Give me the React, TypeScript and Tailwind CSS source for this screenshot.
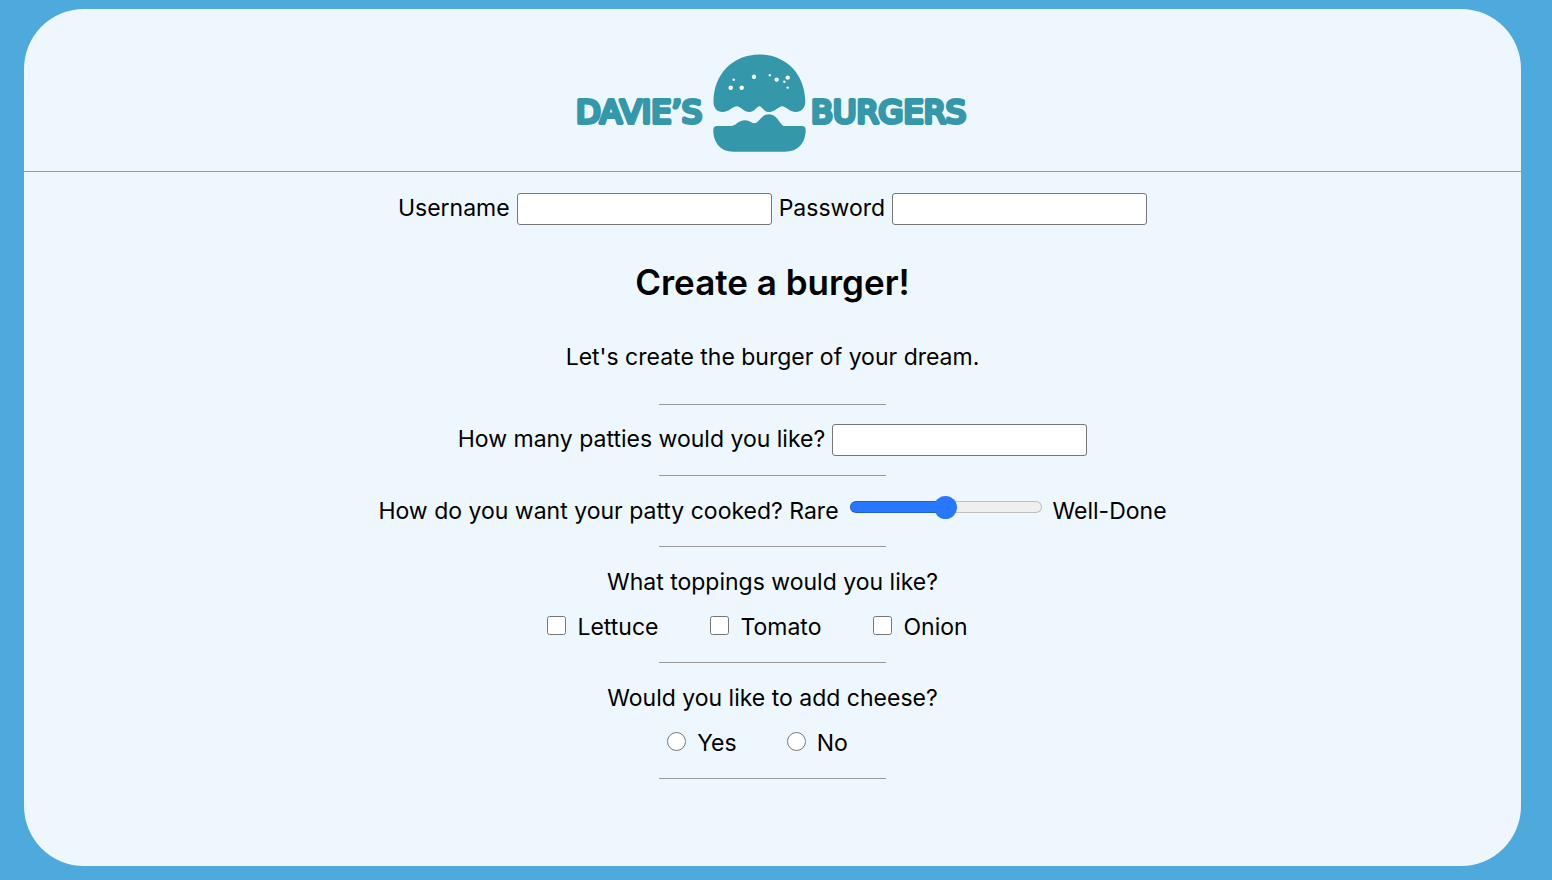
import React, { useState } from 'react';

const Logo = () => (
  <svg xmlns="http://www.w3.org/2000/svg" className="h-[98px] w-[394px] text-[#3598aa]" viewBox="0 0 394 98" fill="currentColor" role="img" aria-label="Davie's Burgers">
    <g className="font-['DejaVu_Sans'] text-[32px]" stroke="currentColor" strokeWidth={4} strokeLinejoin="round">
      <text x="0" y="69">DAVIE’S</text>
      <text x="235" y="69">BURGERS</text>
    </g>
    <path d="M137.5 48C137.5 20 157 .5 183.3 .5S229.3 20 229.3 48C229.3 54 225 58 220 58C213 58 210 52.3 206.3 52.3S199 58 193.3 58S186 52.3 183.3 52.3S179 58 173.3 58S164.5 52.3 160.7 52.3S153 58 146.7 58C141 58 137.5 54 137.5 48Z" />
    <path d="M141 72H155C160 72 162 66.3 169 66.3C174 66.3 175 69.3 178.3 69.3C183 69.3 185 60.3 193 60.3C201 60.3 203 69 207.3 72H226C228.5 72 229.7 73.5 229.7 76C229.7 89 222 97.7 209 97.7H157C145 97.7 137.3 89 137.3 76C137.3 73.5 138.5 72 141 72Z" />
    <g fill="#fff">
      <circle cx="154.7" cy="33.7" r="2.2" />
      <circle cx="165.7" cy="33.7" r="2.2" />
      <circle cx="157.7" cy="25.7" r="1.2" />
      <circle cx="178" cy="22.7" r="2.2" />
      <circle cx="193.8" cy="21.3" r="1.2" />
      <circle cx="200.7" cy="25.6" r="2.2" />
      <circle cx="208.4" cy="27.7" r="1.2" />
      <circle cx="211.7" cy="23.6" r="2.2" />
      <circle cx="211.7" cy="33.6" r="1.2" />
    </g>
  </svg>
);

const Divider = () => <hr className="w-[227px] border-t border-[#9a9a9a]" />;

const TextField: React.FC<{ id: string; label: string; type: string }> = ({ id, label, type }) => (
  <div className="flex items-center gap-[7px]">
    <label htmlFor={id} className="pb-[2px]">{label}</label>
    <input id={id} type={type} className="h-8 w-[255px] rounded-[3px] border border-[#767676] bg-white px-1" />
  </div>
);

const Choice: React.FC<{ type: 'checkbox' | 'radio'; name: string; label: string }> = ({ type, name, label }) => (
  <label className="flex items-center gap-[11px] pr-[30px]">
    <input type={type} name={name} value={label} className="mb-1 size-[19px]" />
    {label}
  </label>
);

const DonenessSlider = () => {
  const [value, setValue] = useState(50);
  return (
    <input
      id="cooked"
      type="range"
      value={value}
      onChange={(e) => setValue(Number(e.target.value))}
      className="mb-2 h-3 w-48 appearance-none rounded-full border border-black/20 bg-origin-border [&::-webkit-slider-thumb]:size-[23px] [&::-webkit-slider-thumb]:appearance-none [&::-webkit-slider-thumb]:rounded-full [&::-webkit-slider-thumb]:bg-[#2778ff]"
      style={{ backgroundImage: `linear-gradient(to right, #2778ff ${value}%, #efefef ${value}%)` }}
    />
  );
};

const App: React.FC = () => {
  return (
    <div className="flex min-h-screen flex-col bg-[#4ea9dc] pt-[9px] pr-[31px] pb-[14px] pl-6 font-['Inter',sans-serif] text-[23px] leading-[30px] text-black">
      <main className="flex-1 rounded-[60px] bg-[#eef7fd]">
        <header className="flex justify-center border-b border-[#9a9a9a] pt-[45px] pb-[19px]">
          <Logo />
        </header>
        <form className="flex flex-col items-center">
          <div className="flex flex-wrap justify-center gap-[7px] pt-[21px]">
            <TextField id="username" label="Username" type="text" />
            <TextField id="password" label="Password" type="password" />
          </div>
          <h1 className="pt-[35px] text-[35px] leading-[44px] font-semibold">Create a burger!</h1>
          <p className="pt-[38px] pb-8">Let's create the burger of your dream.</p>
          <Divider />
          <div className="flex min-h-[70px] items-center">
            <TextField id="patties" label="How many patties would you like?" type="number" />
          </div>
          <Divider />
          <div className="flex min-h-[70px] items-center gap-[11px]">
            <label htmlFor="cooked">How do you want your patty cooked? Rare</label>
            <DonenessSlider />
            <span>Well-Done</span>
          </div>
          <Divider />
          <fieldset className="py-5">
            <legend className="float-left w-full text-center">What toppings would you like?</legend>
            <div className="flex clear-both justify-center gap-[22px] pt-[15px]">
              <Choice type="checkbox" name="toppings" label="Lettuce" />
              <Choice type="checkbox" name="toppings" label="Tomato" />
              <Choice type="checkbox" name="toppings" label="Onion" />
            </div>
          </fieldset>
          <Divider />
          <fieldset className="py-5">
            <legend className="float-left w-full text-center">Would you like to add cheese?</legend>
            <div className="flex clear-both justify-center gap-5 pt-[15px]">
              <Choice type="radio" name="cheese" label="Yes" />
              <Choice type="radio" name="cheese" label="No" />
            </div>
          </fieldset>
          <Divider />
        </form>
      </main>
    </div>
  );
};

export default App;
